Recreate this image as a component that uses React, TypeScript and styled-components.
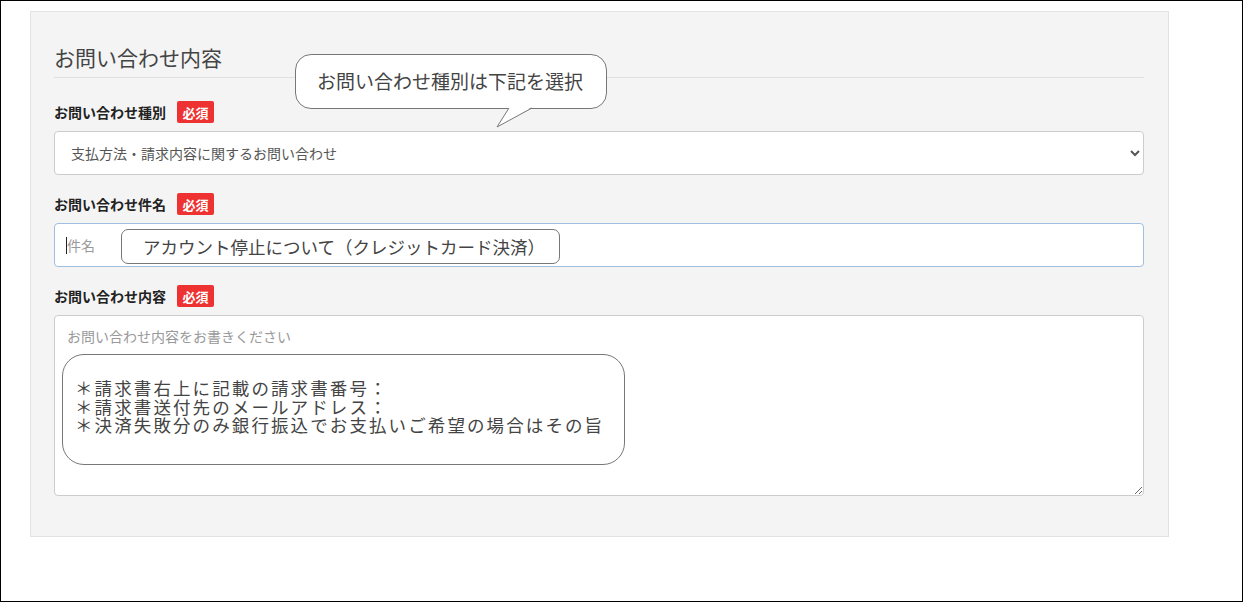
import styled, { createGlobalStyle } from "styled-components";

const GlobalStyle = createGlobalStyle`
  html, body {
    margin: 0;
    padding: 0;
    background: #fff;
  }
  * {
    box-sizing: border-box;
  }
`;

const Frame = styled.div`
  width: 1243px;
  height: 602px;
  border: 1px solid #000;
  padding: 10px 0 0 29px;
  font-family: "Noto Sans CJK JP", "Noto Sans", sans-serif;
  color: #333;
  overflow: hidden;
`;

const Panel = styled.section`
  position: relative;
  width: 1139px;
  height: 526px;
  background: #f4f4f4;
  border: 1px solid #e2e2e2;
  padding: 31px 24px 0 23px;
  display: flex;
  flex-direction: column;
`;

const Heading = styled.h2`
  margin: 0 0 23px;
  padding-bottom: 6px;
  font-size: 21px;
  line-height: 28px;
  font-weight: 400;
  color: #444;
  border-bottom: 1px solid #e0e0e0;
`;

const Field = styled.div`
  display: flex;
  flex-direction: column;
  gap: 8px;
  margin-bottom: 18px;
`;

const LabelRow = styled.div`
  display: flex;
  align-items: center;
  gap: 11px;
  height: 22px;
`;

const Label = styled.label`
  font-size: 14px;
  font-weight: 700;
  color: #222;
`;

const Required = styled.span`
  display: inline-flex;
  align-items: center;
  justify-content: center;
  width: 37px;
  height: 22px;
  background: #ee3131;
  color: #fff;
  font-size: 13px;
  font-weight: 700;
  border-radius: 2px;
`;

const Select = styled.select`
  width: 100%;
  height: 44px;
  padding: 0 10px 0 12px;
  font-family: inherit;
  font-size: 14px;
  color: #555;
  background: #fff;
  border: 1px solid #ccc;
  border-radius: 4px;
  outline: none;
`;

const InputWrap = styled.div`
  position: relative;
`;

const Input = styled.input`
  width: 100%;
  height: 44px;
  padding: 0 12px;
  font-family: inherit;
  font-size: 14px;
  background: #fff;
  border: 1px solid #9fbfe0;
  border-radius: 4px;
  outline: none;
  &::placeholder {
    color: #999;
  }
`;

const Caret = styled.span`
  position: absolute;
  left: 12px;
  top: 14px;
  width: 1px;
  height: 17px;
  background: #222;
`;

const TextArea = styled.textarea`
  width: 100%;
  height: 181px;
  padding: 10px 12px;
  font-family: inherit;
  font-size: 14px;
  background: #fff;
  border: 1px solid #ccc;
  border-radius: 4px;
  outline: none;
  display: block;
  &::placeholder {
    color: #999;
  }
`;

const Callout = styled.div<{ $left: number; $top: number; $w: number; $h: number; $r: number }>`
  position: absolute;
  left: ${(p) => p.$left}px;
  top: ${(p) => p.$top}px;
  width: ${(p) => p.$w}px;
  height: ${(p) => p.$h}px;
  border: 1px solid #777;
  border-radius: ${(p) => p.$r}px;
  background: #fff;
  color: #444;
`;

const CalloutText = styled.div<{ $size: number; $pad: string; $lh: number; $ls?: number }>`
  padding: ${(p) => p.$pad};
  font-size: ${(p) => p.$size}px;
  line-height: ${(p) => p.$lh}px;
  letter-spacing: ${(p) => p.$ls ?? 0}px;
  white-space: nowrap;
`;

const Tail = styled.svg`
  position: absolute;
  left: 200px;
  top: 52px;
  overflow: visible;
`;

export default function App() {
  return (
    <>
      <GlobalStyle />
      <Frame>
        <Panel>
          <Heading>お問い合わせ内容</Heading>

          <Field>
            <LabelRow>
              <Label>お問い合わせ種別</Label>
              <Required>必須</Required>
            </LabelRow>
            <Select defaultValue="billing">
              <option value="billing">支払方法・請求内容に関するお問い合わせ</option>
            </Select>
          </Field>

          <Field>
            <LabelRow>
              <Label>お問い合わせ件名</Label>
              <Required>必須</Required>
            </LabelRow>
            <InputWrap>
              <Input placeholder="件名" />
              <Caret />
            </InputWrap>
          </Field>

          <Field>
            <LabelRow>
              <Label>お問い合わせ内容</Label>
              <Required>必須</Required>
            </LabelRow>
            <TextArea placeholder="お問い合わせ内容をお書きください" />
          </Field>

          <Callout $left={264} $top={42} $w={312} $h={55} $r={16}>
            <CalloutText $size={19} $pad="11px 0 0 21px" $lh={30}>
              お問い合わせ種別は下記を選択
            </CalloutText>
            <Tail width="40" height="22" viewBox="0 0 40 22">
              <polygon points="13,0 36,0 1,20" fill="#fff" />
              <polyline points="13,1 1,20 36,1" fill="none" stroke="#777" strokeWidth="1" />
            </Tail>
          </Callout>

          <Callout $left={90} $top={217} $w={439} $h={35} $r={7}>
            <CalloutText $size={17.5} $pad="3px 0 0 21px" $lh={27}>
              アカウント停止について（クレジットカード決済）
            </CalloutText>
          </Callout>

          <Callout $left={31} $top={342} $w={563} $h={111} $r={22}>
            <CalloutText $size={17.5} $pad="24px 0 0 12px" $lh={18.5} $ls={2.1}>
              ＊請求書右上に記載の請求書番号：
              <br />
              ＊請求書送付先のメールアドレス：
              <br />
              ＊決済失敗分のみ銀行振込でお支払いご希望の場合はその旨
            </CalloutText>
          </Callout>
        </Panel>
      </Frame>
    </>
  );
}
